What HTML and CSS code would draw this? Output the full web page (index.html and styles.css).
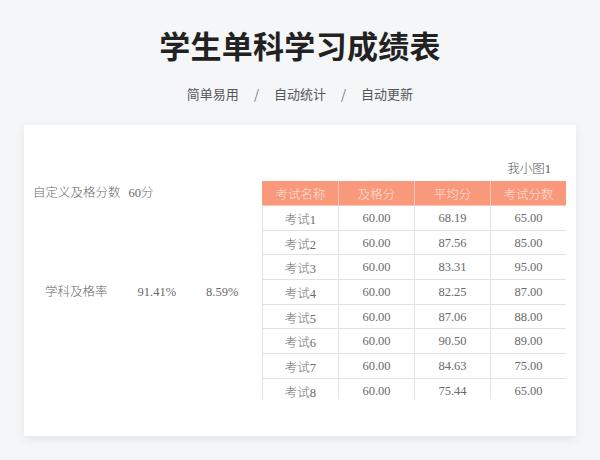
FILE: index.html
```html
<!DOCTYPE html>
<html lang="zh">
<head>
<meta charset="utf-8">
<title>学生单科学习成绩表</title>
<link rel="stylesheet" href="styles.css">
</head>
<body>
<header class="hero">
  <h1 class="title">学生单科学习成绩表</h1>
  <p class="tags"><span>简单易用</span><span class="sep">/</span><span>自动统计</span><span class="sep">/</span><span>自动更新</span></p>
</header>
<main class="card">
  <section class="left">
    <div class="pass-row"><span>自定义及格分数</span><span class="pass-val">60分</span></div>
    <div class="rate-row"><span>学科及格率</span><span class="num">91.41%</span><span class="num">8.59%</span></div>
  </section>
  <section class="right">
    <div class="caption">我小图1</div>
    <div class="table-wrap">
      <table class="grid">
        <thead>
          <tr><th>考试名称</th><th>及格分</th><th>平均分</th><th>考试分数</th></tr>
        </thead>
        <tbody>
          <tr><td>考试1</td><td>60.00</td><td>68.19</td><td>65.00</td></tr>
          <tr><td>考试2</td><td>60.00</td><td>87.56</td><td>85.00</td></tr>
          <tr><td>考试3</td><td>60.00</td><td>83.31</td><td>95.00</td></tr>
          <tr><td>考试4</td><td>60.00</td><td>82.25</td><td>87.00</td></tr>
          <tr><td>考试5</td><td>60.00</td><td>87.06</td><td>88.00</td></tr>
          <tr><td>考试6</td><td>60.00</td><td>90.50</td><td>89.00</td></tr>
          <tr><td>考试7</td><td>60.00</td><td>84.63</td><td>75.00</td></tr>
          <tr><td>考试8</td><td>60.00</td><td>75.44</td><td>65.00</td></tr>
        </tbody>
      </table>
    </div>
  </section>
</main>
</body>
</html>
```
FILE: styles.css
```css
html, body {
  margin: 0;
  padding: 0;
}
body {
  background: #f5f6f8;
  width: 600px;
  height: 460px;
  overflow: hidden;
  font-family: "Noto Sans CJK SC", sans-serif;
}
.hero {
  text-align: center;
  padding-top: 25px;
}
.title {
  margin: 0;
  font-size: 31px;
  line-height: 40px;
  font-weight: 700;
  color: #222;
  letter-spacing: 0.3px;
}
.tags {
  margin: 19px 0 0;
  font-size: 13px;
  line-height: 20px;
  color: #555;
}
.sep {
  margin: 0 15px;
  color: #777;
}
.card {
  margin: 21px 24px 0;
  height: 311px;
  background: #fff;
  box-shadow: 0 3px 10px rgba(0, 0, 0, 0.08);
  display: flex;
  font-family: "Liberation Serif", "Noto Sans CJK SC", serif;
  font-size: 12.5px;
  font-weight: 300;
  color: #6a6a6a;
}
.left {
  width: 238px;
  padding-top: 56px;
}
.pass-row {
  padding-left: 9px;
  line-height: 25px;
}
.pass-val {
  margin-left: 8px;
}
.rate-row {
  margin-top: 74px;
  padding-left: 21px;
  line-height: 25px;
  display: flex;
  gap: 30px;
}
.right {
  width: 304px;
  padding-top: 35px;
}
.caption {
  text-align: right;
  padding-right: 15px;
  line-height: 18px;
  height: 21px;
  color: #555;
}
.table-wrap {
  height: 218px;
  overflow: hidden;
}
.grid {
  border-collapse: collapse;
  table-layout: fixed;
  width: 304px;
}
.grid th, .grid td {
  padding: 0;
  text-align: center;
  width: 75px;
}
.grid th {
  background: #f9987a;
  color: #fde4db;
  font-weight: 300;
  height: 24px;
  border: 1px solid #fbc7b6;
  border-top: 0;
}
.grid th:first-child { border-left-color: #f9987a; }
.grid th:last-child { border-right-color: #f9987a; }
.grid td {
  height: 22.7px;
  border: 1px solid #e2e2e2;
  color: #6a6a6a;
  padding-top: 1px;
}
```
